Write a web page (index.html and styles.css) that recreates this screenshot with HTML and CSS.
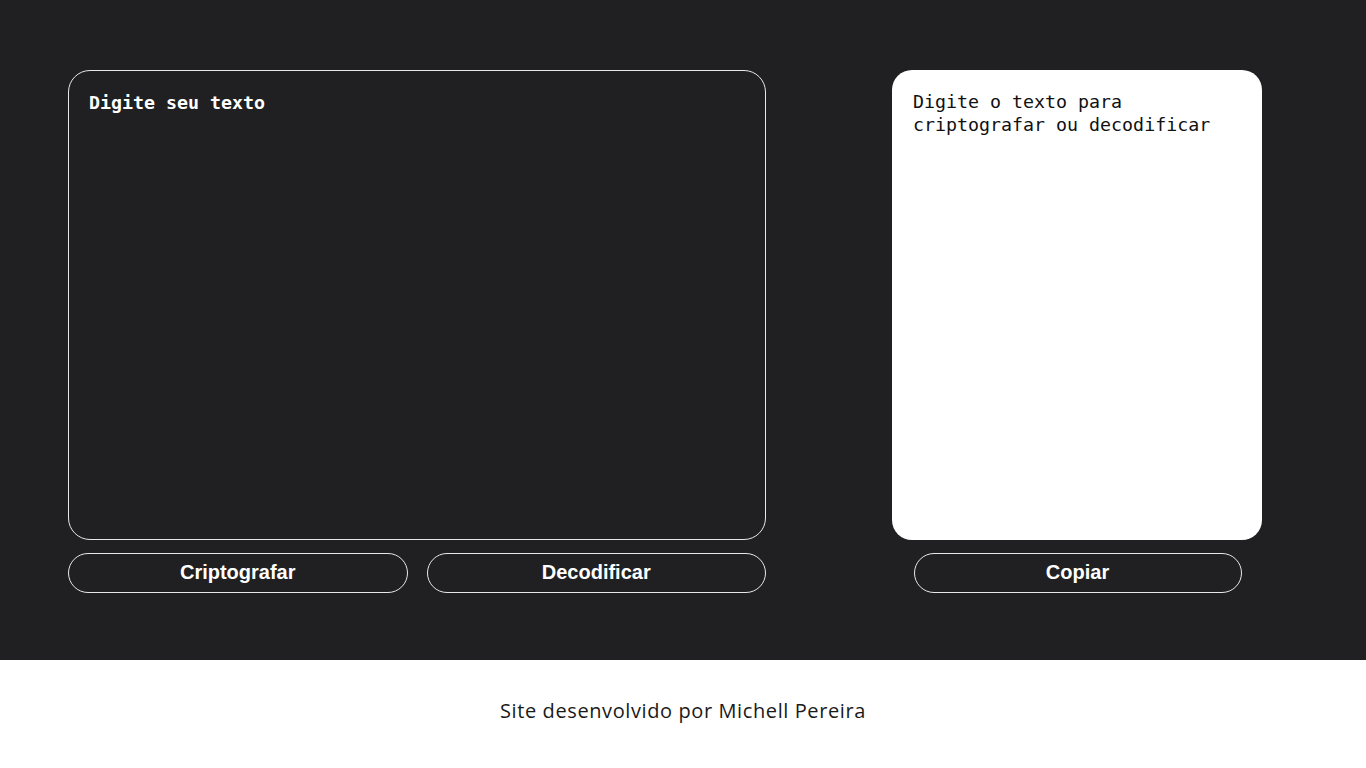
FILE: index.html
```html
<!DOCTYPE html>
<html lang="pt-BR">
<head>
<meta charset="utf-8">
<title>Criptografador</title>
<link rel="stylesheet" href="styles.css">
</head>
<body>
<main class="main">
  <section class="input-col">
    <textarea class="input-text" placeholder="Digite seu texto"></textarea>
    <div class="btn-row">
      <button class="btn">Criptografar</button>
      <button class="btn">Decodificar</button>
    </div>
  </section>
  <section class="output-col">
    <textarea class="output-text" placeholder="Digite o texto para criptografar ou decodificar" readonly></textarea>
    <button class="btn btn-copy">Copiar</button>
  </section>
</main>
<footer class="footer">
  <p>Site desenvolvido por Michell Pereira</p>
</footer>
</body>
</html>
```

FILE: styles.css
```css
* { box-sizing: border-box; }
html, body { margin: 0; padding: 0; }
body { background: #ffffff; }

.main {
  background: #202022;
  height: 660px;
  padding: 70px 0 0 68px;
  display: flex;
  gap: 126px;
}

.input-col {
  width: 698px;
  display: flex;
  flex-direction: column;
  gap: 13px;
}

textarea {
  resize: none;
  font-family: "DejaVu Sans Mono", "Liberation Mono", monospace;
  font-size: 18.3px;
  line-height: 23px;
  padding: 20px 20px;
  outline: none;
  margin: 0;
  display: block;
}

.input-text {
  width: 698px;
  height: 470px;
  background: #202022;
  border: 1px solid #e8e8e8;
  border-radius: 22px;
  color: #fff;
  font-weight: bold;
}
.input-text::placeholder { color: #ffffff; opacity: 1; }

.btn-row {
  display: flex;
  gap: 19px;
}

.btn {
  height: 40px;
  flex: 1;
  background: #202022;
  border: 1px solid #e8e8e8;
  border-radius: 20px;
  color: #fff;
  font-family: "Liberation Sans", Arial, sans-serif;
  font-weight: bold;
  font-size: 20px;
  padding: 0 0 2px;
}

.output-col {
  width: 370px;
  display: flex;
  flex-direction: column;
  align-items: center;
  gap: 13px;
}

.output-text {
  width: 370px;
  height: 470px;
  background: #ffffff;
  border: none;
  border-radius: 20px;
  color: #000;
  font-weight: normal;
  padding-left: 21px;
}
.output-text::placeholder { color: #111; opacity: 1; }

.btn-copy {
  flex: none;
  width: 328px;
  margin-left: 1px;
}

.footer {
  height: 108px;
  display: flex;
  align-items: center;
  justify-content: center;
  padding-bottom: 8px;
}
.footer p {
  margin: 0;
  font-family: "Open Sans", sans-serif;
  font-size: 20px;
  color: #1a1a1a;
  letter-spacing: 0.6px;
}
```
